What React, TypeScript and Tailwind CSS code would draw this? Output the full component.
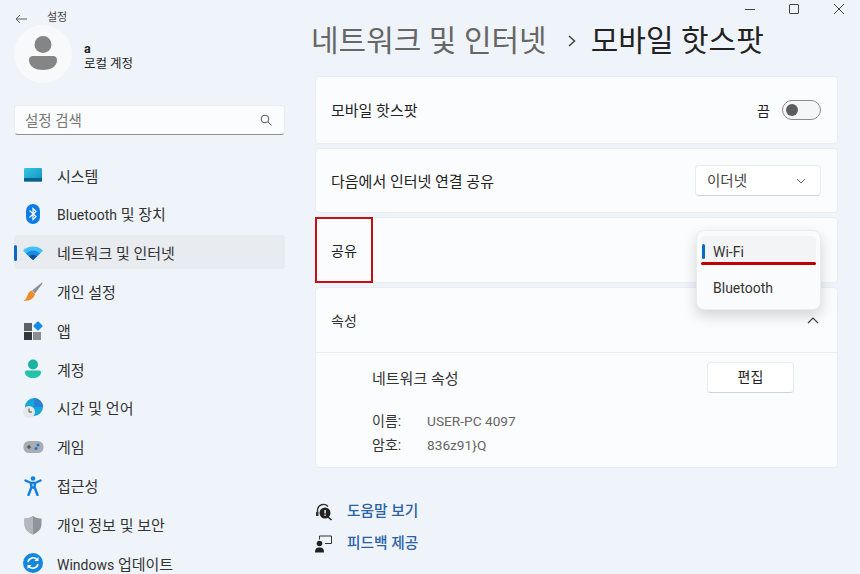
const font = "font-['Roboto','Noto_Sans_CJK_KR',sans-serif]";

const SystemIcon = () => (
  <svg width="20" height="16" viewBox="0 0 20 16">
    <defs>
      <linearGradient id="sys" x1="0" y1="0" x2="1" y2="1">
        <stop offset="0" stopColor="#35c8e0" />
        <stop offset="1" stopColor="#0f8fc4" />
      </linearGradient>
    </defs>
    <rect x="1" y="1" width="18" height="13.5" rx="1" fill="url(#sys)" />
    <rect x="1" y="11" width="18" height="3.5" rx="0.5" fill="#0c5f8c" />
  </svg>
);

const BluetoothIcon = () => (
  <svg width="20" height="22" viewBox="0 0 20 22">
    <rect x="3" y="1" width="14" height="20" rx="7" fill="#0a7ce8" />
    <path d="M6.5 7.5 L13 13.5 L10 16.5 V5.5 L13 8.5 L6.5 14.5" fill="none" stroke="#fff" strokeWidth="1.2" />
  </svg>
);

const WifiIcon = () => (
  <svg width="20" height="14" viewBox="0 0 20 14">
    <path d="M0 4.800 C5 -0.800 15 -0.800 20 4.800 L10 14 Z" fill="#43c0f5" />
    <path d="M3 7.600 C7 3.600 13 3.600 17 7.600 L10 14 Z" fill="#1e88e5" />
    <path d="M6 10.300 C8.500 8.300 11.500 8.300 14 10.300 L10 14 Z" fill="#0b4f9e" />
  </svg>
);

const BrushIcon = () => (
  <svg width="20" height="20" viewBox="0 0 20 20">
    <path d="M19 0.500 L9 8.500 L12 11.500 L19.500 1.500 Z" fill="#8d8f94" />
    <path d="M8.500 8.500 L12 12 C11.500 15.500 8 19 0.500 19 C2.500 17.500 3.500 16 4.500 13.500 C5.300 11 6.500 9.200 8.500 8.500 Z" fill="#ef8a2e" />
  </svg>
);

const AppsIcon = () => (
  <svg width="20" height="20" viewBox="0 0 20 20">
    <rect x="1" y="2" width="8" height="8" fill="#5d6268" />
    <rect x="1" y="11" width="8" height="8" fill="#33373c" />
    <rect x="10" y="11" width="8" height="8" fill="#8a8e93" />
    <rect x="11.5" y="1.5" width="7" height="7" rx="1" fill="#0f8ce9" transform="rotate(45 15 5)" />
  </svg>
);

const AccountIcon = () => (
  <svg width="20" height="20" viewBox="0 0 20 20">
    <circle cx="10" cy="5.5" r="5" fill="#19b3a0" />
    <path d="M2 13 C2 11.8 3 11.5 4 11.5 H16 C17 11.5 18 11.8 18 13 C18 17 14 19 10 19 C6 19 2 17 2 13 Z" fill="#22c3ab" />
  </svg>
);

const TimeIcon = () => (
  <svg width="22" height="21" viewBox="0 0 22 21">
    <circle cx="12" cy="9" r="9" fill="#14a7d8" />
    <path d="M12 0 A9 9 0 0 1 21 9 H12 Z" fill="#2a7fd6" />
    <circle cx="7" cy="14" r="6" fill="#e6e7e8" />
    <path d="M7 10.5 V14 H10" fill="none" stroke="#4a4d50" strokeWidth="1" />
  </svg>
);

const GameIcon = () => (
  <svg width="21" height="14" viewBox="0 0 21 14">
    <rect x="0.5" y="1" width="20" height="12" rx="5.5" fill="#a9acb1" />
    <path d="M4 7 H8 M6 5 V9" stroke="#3a3d40" strokeWidth="1" />
    <circle cx="15" cy="5" r="1.5" fill="#1f6fd1" />
    <circle cx="13" cy="8.5" r="1.5" fill="#1f6fd1" />
  </svg>
);

const AccessIcon = () => (
  <svg width="18" height="20" viewBox="0 0 18 20">
    <circle cx="9" cy="2.5" r="2.3" fill="#0f7fe0" />
    <path d="M1.5 4.5 L7 7 H11 L16.5 4.5 M6.8 7 L7.5 11 L4.5 19 M11.2 7 L10.5 11 L13.5 19 M7.5 11.5 H10.5" fill="none" stroke="#0f7fe0" strokeWidth="2.4" strokeLinecap="round" strokeLinejoin="round" />
  </svg>
);

const ShieldIcon = () => (
  <svg width="20" height="20" viewBox="0 0 20 20">
    <path d="M10 1 C13 3 15.5 3.5 18.5 3.5 V9 C18.5 14 15 17.5 10 19.5 C5 17.5 1.5 14 1.5 9 V3.5 C4.5 3.5 7 3 10 1 Z" fill="#8f9499" />
    <path d="M10 1 C7 3 4.5 3.5 1.5 3.5 V9 C1.5 14 5 17.5 10 19.5 Z" fill="#b4b8bc" />
  </svg>
);

const UpdateIcon = () => (
  <svg width="20" height="20" viewBox="0 0 20 20">
    <circle cx="10" cy="10" r="10" fill="#1487dc" />
    <path d="M5 9 A5.2 5.2 0 0 1 14.2 6.8 M15 11 A5.2 5.2 0 0 1 5.8 13.2" fill="none" stroke="#fff" strokeWidth="1.6" />
    <path d="M15.5 4 V8 H11.5 Z M4.5 16 V12 H8.5 Z" fill="#fff" />
  </svg>
);

const Latin = ({ children }: { children: string }) => <span className="text-[14px]">{children}</span>;

const navItems = [
  { icon: <SystemIcon />, label: <>시스템</> },
  { icon: <BluetoothIcon />, label: <><Latin>Bluetooth</Latin> 및 장치</> },
  { icon: <WifiIcon />, label: <>네트워크 및 인터넷</>, active: true },
  { icon: <BrushIcon />, label: <>개인 설정</> },
  { icon: <AppsIcon />, label: <>앱</> },
  { icon: <AccountIcon />, label: <>계정</> },
  { icon: <TimeIcon />, label: <>시간 및 언어</> },
  { icon: <GameIcon />, label: <>게임</> },
  { icon: <AccessIcon />, label: <>접근성</> },
  { icon: <ShieldIcon />, label: <>개인 정보 및 보안</> },
  { icon: <UpdateIcon />, label: <><Latin>Windows</Latin> 업데이트</> },
];

const Sidebar = () => (
  <aside className="w-[300px] shrink-0 pl-3.5 pr-[15px]">
    <div className="flex h-[25px] items-center pl-[1px] pt-3">
      <svg width="12" height="10" viewBox="0 0 12 10">
        <path d="M12 5 H1 M5 1 L1 5 L5 9" fill="none" stroke="#5c5f63" strokeWidth="1" />
      </svg>
      <span className="ml-[20px] text-[11px] text-[#444]">설정</span>
    </div>
    <div className="flex h-[58px] items-center">
      <div className="flex h-[58px] w-[58px] items-center justify-center rounded-full bg-[#f8f9fb]">
        <svg width="30" height="36" viewBox="0 0 30 36">
          <circle cx="15" cy="8.5" r="8.5" fill="#858585" />
          <path d="M1 24 C1 21.5 2.5 20 5 20 H25 C27.5 20 29 21.500 29 24 C29 31 22 34 15 34 C8 34 1 31 1 24 Z" fill="#858585" />
        </svg>
      </div>
      <div className="ml-[12px] flex flex-col pt-[3px] text-[12.5px] leading-[15px] text-[#222]">
        <span className="font-bold">a</span>
        <span>로컬 계정</span>
      </div>
    </div>
    <div className="mt-[22px] flex h-[30px] items-center justify-between rounded border border-[#e8ebef] border-b-[#8e9196] bg-[#fbfcfe] pl-[10px] pr-3">
      <span className="pt-[3px] text-[14.5px] text-[#777]">설정 검색</span>
      <svg width="12" height="12" viewBox="0 0 12 12">
        <circle cx="5" cy="5" r="3.8" fill="none" stroke="#555" strokeWidth="1" />
        <path d="M8 8 L11.500 11.500" stroke="#555" strokeWidth="1" />
      </svg>
    </div>
    <nav className="mt-[22px] flex flex-col gap-[4px]">
      {navItems.map((item, i) => (
        <div
          key={i}
          className={`relative flex h-[34.8px] shrink-0 items-center rounded ${item.active ? "bg-[#e8ebf0]" : ""}`}
        >
          {item.active && <div className="absolute left-0 top-[10px] h-4 w-[3px] rounded-full bg-[#0b68c4]" />}
          <div className="flex w-[43px] justify-center pr-[5px] pt-[2px]">{item.icon}</div>
          <span className="pt-[5px] text-[15px] text-[#333]">{item.label}</span>
        </div>
      ))}
    </nav>
  </aside>
);

const Card = ({ children, className = "" }: { children: React.ReactNode; className?: string }) => (
  <div className={`rounded border border-[#e9edf3] bg-[#fbfcfe] ${className}`}>{children}</div>
);

const Main = () => (
  <main className="relative min-w-0 flex-1 pl-[15px] pr-[22px]">
    <div className="-mr-[22px] flex h-[20px] items-center justify-end gap-[34px] pb-[2px] pr-[15px]">
      <div className="h-[1px] w-[10px] bg-[#444]" />
      <div className="h-[10px] w-[10px] rounded-[1px] border border-[#444]" />
      <svg width="12" height="12" viewBox="0 0 12 12">
        <path d="M1 1 L11 11 M11 1 L1 11" stroke="#444" strokeWidth="1" />
      </svg>
    </div>
    <div className="-ml-[4px] flex h-[40px] items-center pt-[1px] text-[30px] leading-[37px]">
      <span className="text-[#666]">네트워크 및 인터넷</span>
      <svg width="10" height="14" viewBox="0 0 10 14" className="ml-[20px] mr-[14px]">
        <path d="M2 2 L7.500 7 L2 12" fill="none" stroke="#444" strokeWidth="1.5" />
      </svg>
      <span className="text-[#222]">모바일 핫스팟</span>
    </div>
    <div className="mt-[16px] flex flex-col gap-[4px]">
      <Card className="flex h-[68px] items-center justify-between pl-[15px] pr-4">
        <span className="pt-[3px] text-[15px] text-[#222]">모바일 핫스팟</span>
        <div className="flex items-center gap-3">
          <span className="pt-[3px] text-[14px] text-[#222]">끔</span>
          <div className="flex h-[20px] w-[39px] items-center rounded-full border border-[#8a8a8a] bg-[#f5f6f8] pl-[3px]">
            <div className="h-3 w-3 rounded-full bg-[#5d5d5d]" />
          </div>
        </div>
      </Card>
      <Card className="flex h-[65px] items-center justify-between pl-[15px] pr-4">
        <span className="pt-[4px] text-[15px] text-[#222]">다음에서 인터넷 연결 공유</span>
        <div className="flex h-[31px] w-[126px] items-center justify-between rounded border border-[#e8ebef] border-b-[#d0d3d8] bg-white pl-[11px] pr-[14px]">
          <span className="pt-[2px] text-[14.5px] text-[#444]">이더넷</span>
          <svg width="10" height="6" viewBox="0 0 10 6">
            <path d="M1 1 L5 5 L9 1" fill="none" stroke="#666" strokeWidth="1" />
          </svg>
        </div>
      </Card>
      <Card className="flex h-[66px] items-center pl-[15px]">
        <span className="pt-[2px] text-[14px] text-[#222]">공유</span>
      </Card>
      <Card className="h-[181px]">
        <div className="flex h-[65px] items-center justify-between border-b border-[#e9edf3] pl-[15px] pr-[18px]">
          <span className="pt-[2px] text-[14px] text-[#333]">속성</span>
          <svg width="12" height="7" viewBox="0 0 12 7">
            <path d="M1 6 L6 1 L11 6" fill="none" stroke="#444" strokeWidth="1.2" />
          </svg>
        </div>
        <div className="pl-[56px] pr-[43px] pt-[9px]">
          <div className="flex h-[31px] items-center justify-between">
            <span className="pt-[4px] text-[15px] text-[#333]">네트워크 속성</span>
            <div className="flex h-[31px] w-[87px] items-center justify-center rounded border border-[#e8ebef] border-b-[#d0d3d8] bg-white text-[14px] text-[#222]">
              편집
            </div>
          </div>
          <div className="mt-[19px] grid grid-cols-[55px_1fr] gap-y-[5px] text-[14px] leading-[19px]">
            <span className="text-[#333]">이름:</span>
            <span className="text-[13.7px] text-[#666]">USER-PC 4097</span>
            <span className="text-[#333]">암호:</span>
            <span className="text-[13.7px] text-[#666]">{"836z91}Q"}</span>
          </div>
        </div>
      </Card>
    </div>
    <div className="mt-[34px] flex flex-col gap-[13px]">
      <div className="flex h-[19px] items-center">
        <svg width="18" height="18" viewBox="0 0 18 18" className="mr-[14px]">
          <path d="M2.500 10 V7 A6 6 0 0 1 13 3.500" fill="none" stroke="#333" strokeWidth="1.4" />
          <circle cx="10" cy="10" r="5.500" fill="#222" />
          <path d="M13 14 L16.500 17" stroke="#222" strokeWidth="1.6" />
          <rect x="1" y="9" width="2.500" height="4" fill="#333" />
          <rect x="9.400" y="7" width="1.400" height="3.500" fill="#fff" />
          <rect x="9.400" y="11.500" width="1.400" height="1.400" fill="#fff" />
        </svg>
        <span className="text-[14.7px] font-medium text-[#2a62a8]">도움말 보기</span>
      </div>
      <div className="flex h-[19px] items-center">
        <svg width="18" height="18" viewBox="0 0 18 18" className="mr-[14px]">
          <circle cx="4.500" cy="8.500" r="2.800" fill="#222" />
          <path d="M0 17.500 C0 13.800 1.500 12.500 4.500 12.500 C7.500 12.500 9 13.800 9 17.500 Z" fill="#222" />
          <path d="M4.500 4.500 V1 H16.500 V8.500 H10" fill="none" stroke="#333" strokeWidth="1" />
        </svg>
        <span className="text-[14.7px] font-medium text-[#2a62a8]">피드백 제공</span>
      </div>
    </div>

    {/* red box over the 공유 row */}
    <div className="absolute left-[15px] top-[217px] h-[66px] w-[58px] border-2 border-[#c80f0f]" />

    {/* dropdown menu */}
    <div className="absolute left-[396px] top-[230px] h-[80px] w-[125px] rounded-lg border border-[#e9ebef] bg-[#fafbfc] px-[4px] pt-[5px] shadow-[0_6px_14px_rgba(0,0,0,0.16)]">
      <div className="relative flex h-[29px] items-center rounded bg-[#f3f4f6] pl-3 pt-[3px] text-[14px] text-[#333]">
        <div className="absolute left-[1px] top-[8px] h-[15px] w-[3px] rounded-full bg-[#0b68c4]" />
        Wi-Fi
      </div>
      <div className="mt-[7px] flex h-[29px] items-center pl-3 pt-[3px] text-[14px] text-[#333]">Bluetooth</div>
    </div>
    <div className="absolute left-[401px] top-[262px] h-[3px] w-[115px] rounded-full bg-[#c00000]" />
  </main>
);

export default function App() {
  return (
    <div className={`flex h-[574px] w-[860px] overflow-hidden bg-[#eff3fa] ${font}`}>
      <Sidebar />
      <Main />
    </div>
  );
}
